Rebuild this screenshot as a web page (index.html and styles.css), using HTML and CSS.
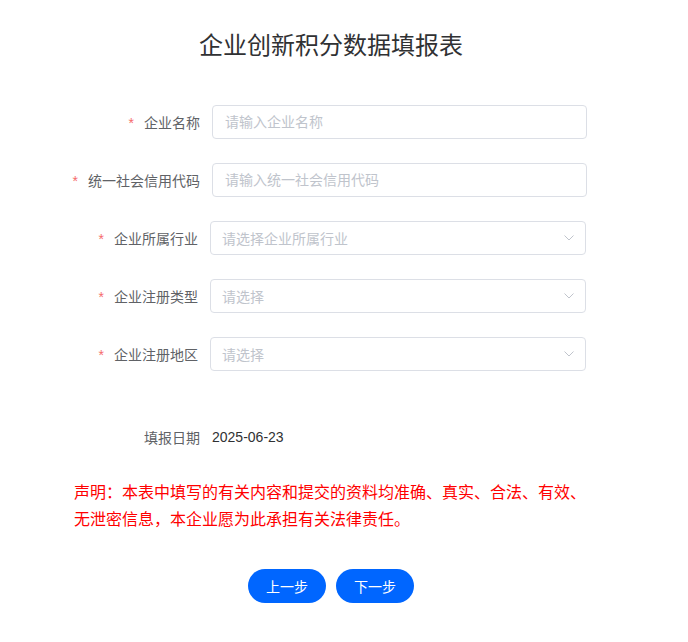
FILE: index.html
```html
<!DOCTYPE html>
<html lang="zh-CN">
<head>
  <meta charset="UTF-8" />
  <meta name="viewport" content="width=device-width, initial-scale=1" />
  <title>企业创新积分数据填报表</title>
  <link rel="stylesheet" href="styles.css">
</head>
<body>
  <div class="page">
    <h2 class="title">企业创新积分数据填报表</h2>
    <form class="form">
      <div class="form-row">
        <label class="label required">企业名称</label>
        <input class="input" type="text" placeholder="请输入企业名称" />
      </div>
      <div class="form-row">
        <label class="label required">统一社会信用代码</label>
        <input class="input" type="text" placeholder="请输入统一社会信用代码" />
      </div>
      <div class="form-row select-row">
        <label class="label required">企业所属行业</label>
        <div class="select">
          <span class="placeholder">请选择企业所属行业</span>
          <svg class="arrow" width="10" height="6" viewBox="0 0 10 6"><path d="M0.5 0.5 L5 5 L9.5 0.5" fill="none" stroke="#c0c4cc" stroke-width="1"/></svg>
        </div>
      </div>
      <div class="form-row select-row">
        <label class="label required">企业注册类型</label>
        <div class="select">
          <span class="placeholder">请选择</span>
          <svg class="arrow" width="10" height="6" viewBox="0 0 10 6"><path d="M0.5 0.5 L5 5 L9.5 0.5" fill="none" stroke="#c0c4cc" stroke-width="1"/></svg>
        </div>
      </div>
      <div class="form-row select-row">
        <label class="label required">企业注册地区</label>
        <div class="select">
          <span class="placeholder">请选择</span>
          <svg class="arrow" width="10" height="6" viewBox="0 0 10 6"><path d="M0.5 0.5 L5 5 L9.5 0.5" fill="none" stroke="#c0c4cc" stroke-width="1"/></svg>
        </div>
      </div>
      <div class="form-row date-row">
        <label class="label">填报日期</label>
        <span class="value">2025-06-23</span>
      </div>
    </form>
    <p class="notice">声明：本表中填写的有关内容和提交的资料均准确、真实、合法、有效、无泄密信息，本企业愿为此承担有关法律责任。</p>
    <div class="actions">
      <button type="button" class="btn">上一步</button>
      <button type="button" class="btn">下一步</button>
    </div>
  </div>
</body>
</html>
```

FILE: styles.css
```css
body {
  margin: 0;
  font-family: "Liberation Sans", "Noto Sans CJK SC", sans-serif;
  color: #606266;
  background: #fff;
}
.page {
  width: 662px;
}
.title {
  margin: 0;
  padding-top: 30px;
  height: 32px;
  line-height: 32px;
  font-size: 24px;
  font-weight: normal;
  text-align: center;
  color: #303133;
}
.form {
  margin-top: 43px;
  padding-left: 60px;
  width: 527px;
}
.form-row {
  display: flex;
  align-items: center;
  gap: 12px;
  height: 34px;
  margin-bottom: 24px;
}
.label {
  width: 140px;
  flex-shrink: 0;
  text-align: right;
  font-size: 14px;
  color: #606266;
}
.required::before {
  content: "*";
  color: #f56c6c;
  margin-right: 10px;
}
.input {
  flex: 1;
  box-sizing: border-box;
  height: 34px;
  padding: 0 12px;
  border: 1px solid #dcdfe6;
  border-radius: 4px;
  font-family: inherit;
  font-size: 14px;
  color: #606266;
  outline: none;
}
.input::placeholder {
  color: #c0c4cc;
}
.select-row .label {
  width: 138px;
}
.select {
  flex: 1;
  box-sizing: border-box;
  height: 34px;
  margin-right: 1px;
  padding: 0 11px;
  border: 1px solid #dcdfe6;
  border-radius: 4px;
  display: flex;
  align-items: center;
  justify-content: space-between;
}
.placeholder {
  font-size: 14px;
  color: #c0c4cc;
}
.arrow {
  display: block;
}
.date-row {
  margin-top: 49px;
  margin-bottom: 0;
}
.value {
  font-size: 14px;
  color: #303133;
}
.notice {
  margin: 25px 0 0 74px;
  width: 516px;
  font-size: 16px;
  line-height: 27px;
  color: #ff0000;
}
.actions {
  display: flex;
  justify-content: center;
  gap: 10px;
  margin-top: 36px;
}
.btn {
  width: 78px;
  height: 34px;
  border: none;
  border-radius: 17px;
  background: #0066ff;
  color: #fff;
  font-family: inherit;
  font-size: 14px;
  cursor: pointer;
}
```
